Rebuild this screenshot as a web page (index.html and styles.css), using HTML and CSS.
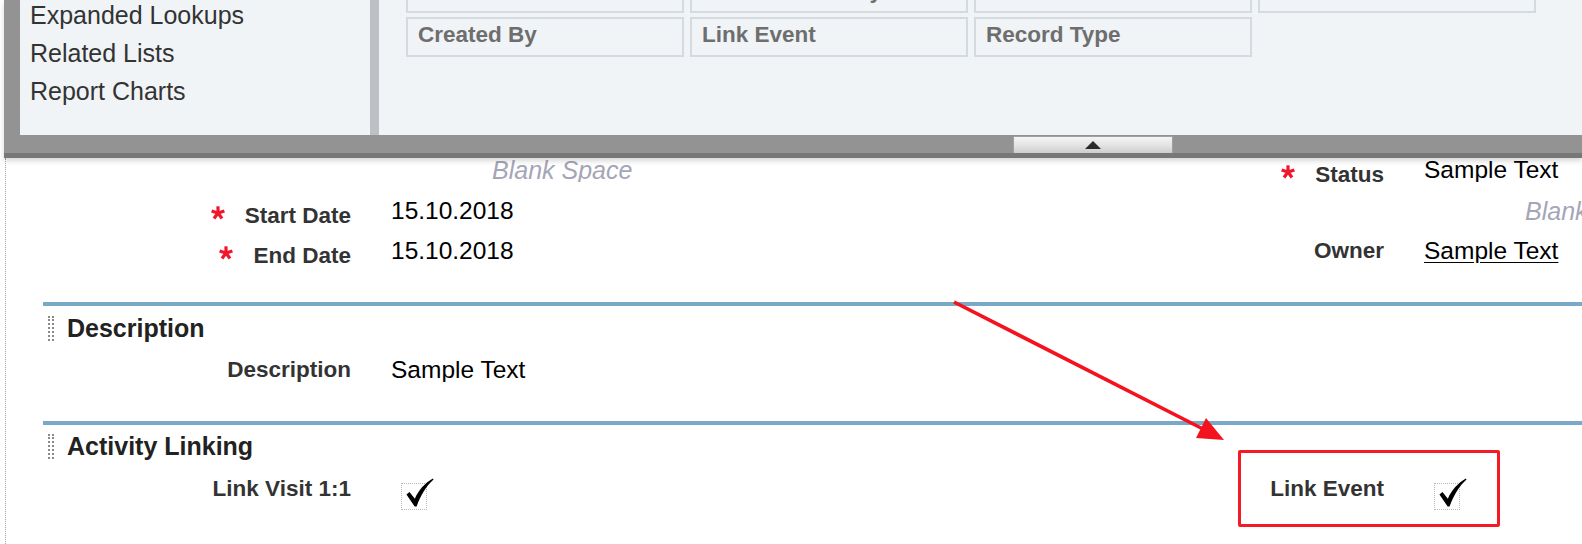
FILE: index.html
```html
<!DOCTYPE html>
<html lang="en">
<head>
<meta charset="utf-8">
<title>Page Layout Editor</title>
<link rel="stylesheet" href="styles.css">
</head>
<body>
<div class="page">
  <div class="palette">
    <div class="palette-body">
      <div class="palette-side">
        <ul class="palette-list">
          <li>Expanded Lookups</li>
          <li>Related Lists</li>
          <li>Report Charts</li>
        </ul>
      </div>
      <div class="splitter"></div>
      <div class="palette-fields">
        <div class="field-grid">
          <div class="pfield">Status</div>
          <div class="pfield">Last Modified By</div>
          <div class="pfield">Owner</div>
          <div class="pfield">Start Date</div>
          <div class="pfield">Created By</div>
          <div class="pfield">Link Event</div>
          <div class="pfield">Record Type</div>
        </div>
      </div>
    </div>
    <div class="palette-bar">
      <div class="handle"><span class="tri"></span></div>
    </div>
  </div>

  <div class="canvas">
    <div class="rows rows-top">
      <div class="label"></div>
      <div class="value"><span class="blank">Blank Space</span></div>
      <div class="label req"><svg class="star" viewBox="0 0 14 14"><g stroke="#f3162b" stroke-width="3.2"><line x1="7" y1="7" x2="7" y2="0.3"/><line x1="7" y1="7" x2="13.4" y2="4.9"/><line x1="7" y1="7" x2="11" y2="12.5"/><line x1="7" y1="7" x2="3" y2="12.5"/><line x1="7" y1="7" x2="0.6" y2="4.9"/></g></svg>Status</div>
      <div class="value">Sample Text</div>

      <div class="label req"><svg class="star" viewBox="0 0 14 14"><g stroke="#f3162b" stroke-width="3.2"><line x1="7" y1="7" x2="7" y2="0.3"/><line x1="7" y1="7" x2="13.4" y2="4.9"/><line x1="7" y1="7" x2="11" y2="12.5"/><line x1="7" y1="7" x2="3" y2="12.5"/><line x1="7" y1="7" x2="0.6" y2="4.9"/></g></svg>Start Date</div>
      <div class="value">15.10.2018</div>
      <div class="label"></div>
      <div class="value"><span class="blank">Blank Space</span></div>

      <div class="label req"><svg class="star" viewBox="0 0 14 14"><g stroke="#f3162b" stroke-width="3.2"><line x1="7" y1="7" x2="7" y2="0.3"/><line x1="7" y1="7" x2="13.4" y2="4.9"/><line x1="7" y1="7" x2="11" y2="12.5"/><line x1="7" y1="7" x2="3" y2="12.5"/><line x1="7" y1="7" x2="0.6" y2="4.9"/></g></svg>End Date</div>
      <div class="value">15.10.2018</div>
      <div class="label">Owner</div>
      <div class="value"><span class="link">Sample Text</span></div>
    </div>

    <div class="section-rule rule-1"></div>
    <div class="section-head head-1"><span class="grip"></span>Description</div>
    <div class="rows rows-desc">
      <div class="label">Description</div>
      <div class="value">Sample Text</div>
      <div class="label"></div>
      <div class="value"></div>
    </div>

    <div class="section-rule rule-2"></div>
    <div class="section-head head-2"><span class="grip"></span>Activity Linking</div>
    <div class="rows rows-link">
      <div class="label">Link Visit 1:1</div>
      <div class="value"><div class="check"><svg class="tick" viewBox="0 0 30 30"><path d="M1.5,17 L4.6,14.6 L10.2,21.4 C14,12.8 20,5.8 28.8,0.6 L29.5,1.6 C22.4,8 16.6,16.8 12,29.4 L10,29.4 Z" fill="#000"/></svg></div></div>
      <div class="label">Link Event</div>
      <div class="value"><div class="check"><svg class="tick" viewBox="0 0 30 30"><path d="M1.5,17 L4.6,14.6 L10.2,21.4 C14,12.8 20,5.8 28.8,0.6 L29.5,1.6 C22.4,8 16.6,16.8 12,29.4 L10,29.4 Z" fill="#000"/></svg></div></div>
    </div>
  </div>

  <div class="callout"></div>
  <svg class="arrow" viewBox="0 0 1582 544" width="1582" height="544">
    <line x1="954" y1="302" x2="1203" y2="429" stroke="#f5121f" stroke-width="3.6"/>
    <polygon points="1224,440 1196,438 1206,418" fill="#f5121f"/>
  </svg>
</div>
</body>
</html>
```

FILE: styles.css
```css
* { box-sizing: border-box; }

html, body {
  margin: 0;
  padding: 0;
  background: #ffffff;
}

body {
  width: 1582px;
  height: 544px;
  overflow: hidden;
  font-family: "Liberation Sans", Arial, sans-serif;
  color: #333;
}

.page {
  position: relative;
  width: 1582px;
  height: 544px;
  overflow: hidden;
}

/* ---------- palette ---------- */
.palette {
  position: relative;
  z-index: 1;
  margin-left: 4px;
  background: #939393;
  border-bottom: 5px solid #777777;
  box-shadow: 0 3px 5px rgba(0, 0, 0, 0.16);
}

.palette-body {
  display: flex;
  height: 135px;
  padding-left: 16px;
}

.palette-side {
  width: 350px;
  background: #f0f4f7;
  overflow: hidden;
}

.palette-list {
  list-style: none;
  margin: -4px 0 0 0;
  padding: 0 0 0 10px;
  font-size: 25px;
  line-height: 38px;
  color: #333;
}

.splitter {
  width: 9px;
  background: #bfc0c5;
}

.palette-fields {
  flex: 1;
  background: #f0f4f7;
  overflow: hidden;
}

.field-grid {
  display: grid;
  grid-template-columns: repeat(4, 278px);
  column-gap: 6px;
  row-gap: 4px;
  padding-left: 27px;
  margin-top: -27px;
}

.pfield {
  height: 40px;
  border: 2px solid #d4dadf;
  background: #f0f4f7;
  padding-left: 10px;
  font-size: 22.5px;
  font-weight: bold;
  line-height: 32px;
  color: #6e6e6e;
  white-space: nowrap;
  overflow: hidden;
}

.palette-bar {
  height: 18px;
  padding-left: 1009px;
  padding-top: 1px;
}

.handle {
  width: 160px;
  height: 17px;
  border: 1px solid #a0a0a0;
  border-bottom: none;
  background: linear-gradient(#f4f4f4, #e4e4e4 50%, #cdcdcd);
  display: flex;
  align-items: center;
  justify-content: center;
}

.tri {
  width: 0;
  height: 0;
  border-left: 8px solid transparent;
  border-right: 8px solid transparent;
  border-bottom: 8px solid #2b2b2b;
}

/* ---------- canvas ---------- */
.canvas {
  margin-left: 5px;
  border-left: 1px dotted #a3a3a3;
  height: 386px;
}

.rows {
  display: grid;
  grid-template-columns: 345px 560px 393px 1fr;
  column-gap: 40px;
  line-height: 24px;
}

.rows-top {
  grid-template-rows: repeat(3, 24px);
  row-gap: 16.5px;
}

.rows-desc {
  grid-template-rows: 24px;
  margin-top: 15px;
}

.rows-link {
  grid-template-rows: 24px;
  margin-top: 16px;
}

.label {
  text-align: right;
  font-size: 22.5px;
  font-weight: bold;
  color: #333;
  white-space: nowrap;
}

.label.req { padding-top: 5px; }

.star {
  width: 14px;
  height: 14px;
  margin-right: 20px;
  vertical-align: 3px;
}

.value {
  font-size: 24.5px;
  color: #000;
  white-space: nowrap;
  overflow: hidden;
  min-width: 0;
}

.blank {
  display: inline-block;
  padding-left: 101px;
  font-size: 25px;
  font-style: italic;
  color: #a5a5b8;
}

.link {
  text-decoration: underline;
  text-decoration-thickness: 1.5px;
  text-underline-offset: 3px;
}

.section-rule {
  height: 4px;
  margin-left: 37px;
  background: #7aa8c8;
}

.rule-1 { margin-top: 39px; }
.rule-2 { margin-top: 39px; }

.section-head {
  display: flex;
  align-items: center;
  gap: 13px;
  height: 30px;
  padding-left: 42px;
  font-size: 25px;
  font-weight: bold;
  color: #222;
}

.head-1 { margin-top: 7px; }
.head-2 { margin-top: 6px; }

.grip {
  width: 6px;
  height: 25px;
  border-left: 2px dotted #8a8a8a;
  border-right: 2px dotted #8a8a8a;
}

.rows-link .value { overflow: visible; }

.check {
  position: relative;
  width: 26px;
  height: 27px;
  margin: 6px 0 0 10px;
  border: 1px dotted #b8b8b8;
}

.tick {
  position: absolute;
  left: 3px;
  top: -6px;
  width: 29px;
  height: 29px;
}

/* ---------- annotations ---------- */
.callout {
  position: absolute;
  left: 1238px;
  top: 450px;
  width: 262px;
  height: 77px;
  border: 3px solid #f41a26;
  border-radius: 2px;
}

.arrow {
  position: absolute;
  left: 0;
  top: 0;
  pointer-events: none;
}
```
